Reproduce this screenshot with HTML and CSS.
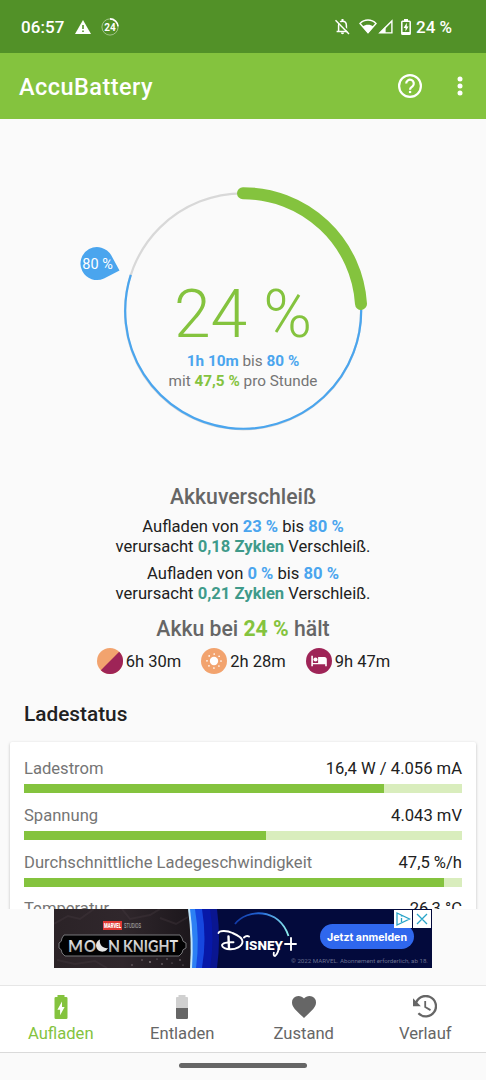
FILE: index.html
```html
<!DOCTYPE html>
<html lang="de">
<head>
    <meta charset="utf-8" />
    <title>AccuBattery</title>
    <link rel="stylesheet" href="styles.css">
</head>
<body>
<div class="phone">
    <!-- status bar -->
    <div class="statusbar">
        <span class="time">06:57</span>
        <svg class="warn" width="16" height="14" viewBox="0 0 16 14">
            <path d="M8 0L16 14H0z" fill="#fff"/>
            <path d="M8 5v4M8 10.5v1.6" stroke="#529128" stroke-width="1.6"/>
        </svg>
        <svg class="level" width="18" height="18" viewBox="0 0 18 18">
            <circle cx="9" cy="9" r="8.1" fill="none" stroke="#a0c387" stroke-width="1"/>
            <path d="M9 .9A8.1 8.1 0 0 1 17.1 8.4" fill="none" stroke="#fff" stroke-width="1.6"/>
            <text x="9" y="12.6" text-anchor="middle">24</text>
        </svg>
        <span class="space"></span>
        <svg class="bell" width="15" height="16" viewBox="0 0 15 16">
            <path d="M3.6 12V6.4C3.6 3.8 5.3 2.2 7.5 2.2s3.9 1.6 3.9 4.2V12M1.6 12.4h11.8" fill="none" stroke="#fff" stroke-width="1.5"/>
            <path d="M6.5 0h2v2.4h-2zM5.9 13.6h3.2a1.6 1.6 0 0 1-3.2 0z" fill="#fff"/>
            <path d="M1.6 .4L15 14" stroke="#529128" stroke-width="1.6"/>
            <path d="M.5 1.2L14 15" stroke="#fff" stroke-width="1.4"/>
        </svg>
        <svg class="wifi" width="18" height="15" viewBox="0 0 18 15">
            <path d="M1 4.4C5.4-.2 12.6-.2 17 4.4L9 13.6z" fill="none" stroke="#fff" stroke-width="1.4"/>
            <path d="M3.6 7.6c3.2-2.6 7.6-2.6 10.8 0L9 14.2z" fill="#fff"/>
        </svg>
        <svg class="signal" width="15" height="15" viewBox="0 0 15 15">
            <path d="M13.9 1.9v12H1.9z" fill="none" stroke="#fff" stroke-width="1.4"/>
            <path d="M7.6 7.6v6.4H1.4z" fill="#fff"/>
        </svg>
        <svg class="batt" width="10" height="16" viewBox="0 0 10 16">
            <path d="M3 0h4v2H3z" fill="#fff"/>
            <rect x=".8" y="2.3" width="8.4" height="12.9" rx=".8" fill="none" stroke="#fff" stroke-width="1.5"/>
            <path d="M1 13h8v2H1z" fill="#fff"/>
            <path d="M5.8 3.8L2.6 8.9h1.9v3.6l3-4.9h-1.7z" fill="#fff"/>
        </svg>
        <span class="percent">24 %</span>
    </div>

    <!-- title bar -->
    <div class="appbar">
        <h1>AccuBattery</h1>
        <svg class="help" width="24" height="24" viewBox="0 0 24 24">
            <circle cx="12" cy="12" r="10.9" fill="none" stroke="#fff" stroke-width="2.2"/>
            <path d="M8.2 9.6a3.8 3.8 0 1 1 6.3 2.8C13 13.6 12 14 12 15.8" fill="none" stroke="#fff" stroke-width="2.2"/>
            <path d="M10.9 16.9h2.3v2.2h-2.3z" fill="#fff"/>
        </svg>
        <svg class="more" width="6" height="20" viewBox="0 0 6 20">
            <g fill="#fff"><circle cx="3" cy="3" r="2.5"/><circle cx="3" cy="10" r="2.5"/><circle cx="3" cy="17" r="2.5"/></g>
        </svg>
    </div>

    <div class="content">
        <!-- charge ring -->
        <div class="gauge">
            <svg width="326" height="260" viewBox="80 180 326 260">
                <g fill="none">
                    <circle cx="243" cy="311.3" r="118" stroke="#d8d8d8" stroke-width="2.2"/>
                    <path d="M361 304A118 118 0 1 1 130.8 274.8" stroke="#4aa5ee" stroke-width="2.2"/>
                    <path d="M243 193.2A118 118 0 0 1 361 303.9" stroke="#84c33e" stroke-width="12" stroke-linecap="round"/>
                </g>
                <path d="M119.5 270.5L104 278.5A16.5 16.5 0 1 1 111.2 255.2z" fill="#4aa5ee"/>
                <text class="pin" x="97.6" y="269.2" text-anchor="middle">80 %</text>
            </svg>
            <div class="gauge-text">
                <div class="big">24 %</div>
                <div><b class="blue">1h 10m</b> bis <b class="blue">80 %</b></div>
                <div>mit <b class="green">47,5 %</b> pro Stunde</div>
            </div>
        </div>

        <!-- wear -->
        <div class="wear">
            <h2>Akkuverschleiß</h2>
            <p>Aufladen von <b class="blue">23 %</b> bis <b class="blue">80 %</b><br>verursacht <b class="teal">0,18 Zyklen</b> Verschleiß.</p>
            <p>Aufladen von <b class="blue">0 %</b> bis <b class="blue">80 %</b><br>verursacht <b class="teal">0,21 Zyklen</b> Verschleiß.</p>
            <h2 class="lasts">Akku bei <b class="green">24 %</b> hält</h2>
        </div>
        <div class="times">
            <div class="item">
                <svg width="26" height="26" viewBox="0 0 26 26">
                    <circle cx="13" cy="13" r="13" fill="#f2a36e"/>
                    <path d="M22.2 3.8A13 13 0 0 1 3.8 22.2z" fill="#9e2457"/>
                </svg>
                <span>6h 30m</span>
            </div>
            <div class="item">
                <svg width="26" height="26" viewBox="0 0 26 26">
                    <circle cx="13" cy="13" r="13" fill="#f2a36e"/>
                    <circle cx="13" cy="13" r="4.2" fill="#fff"/>
                    <circle cx="13" cy="13" r="7" fill="none" stroke="#fff" stroke-width="1.7" stroke-linecap="round" stroke-dasharray="0 5.498"/>
                </svg>
                <span>2h 28m</span>
            </div>
            <div class="item">
                <svg width="26" height="26" viewBox="0 0 26 26">
                    <circle cx="13" cy="13" r="13" fill="#9e2457"/>
                    <path d="M5.3 7.8h1.6v7.2h5.2V9h6.2a2.5 2.5 0 0 1 2.5 2.5v6.7h-1.6v-2H6.9v2H5.3z" fill="#fff"/>
                    <circle cx="9.5" cy="11.5" r="2.1" fill="#fff"/>
                </svg>
                <span>9h 47m</span>
            </div>
        </div>

        <!-- charging status -->
        <h3>Ladestatus</h3>
        <div class="card">
            <div class="row"><span>Ladestrom</span><em>16,4 W / 4.056 mA</em></div>
            <div class="bar"><div style="width: 82.1%"></div></div>
            <div class="row"><span>Spannung</span><em>4.043 mV</em></div>
            <div class="bar"><div style="width: 55.3%"></div></div>
            <div class="row"><span>Durchschnittliche Ladegeschwindigkeit</span><em>47,5 %/h</em></div>
            <div class="bar"><div style="width: 96%"></div></div>
            <div class="row"><span>Temperatur</span><em>26,3 °C</em></div>
        </div>
    </div>

    <!-- banner -->
    <div class="ad">
        <svg width="378" height="59" viewBox="0 0 378 59">
            <defs>
                <linearGradient id="stone"><stop offset="0" stop-color="#2b2327"/><stop offset=".5" stop-color="#30272c"/><stop offset="1" stop-color="#1c171c"/></linearGradient>
                <linearGradient id="silver" x2="0" y2="1"><stop offset="0" stop-color="#fff"/><stop offset="1" stop-color="#999"/></linearGradient>
                <linearGradient id="arc"><stop offset="0" stop-color="#123aa8"/><stop offset=".5" stop-color="#2469d8"/><stop offset="1" stop-color="#8ff0ee"/></linearGradient>
            </defs>
            <rect width="378" height="59" fill="#030a3c"/>
            <path d="M0 0h163q4 30 0 59H0z" fill="#0a1690"/>
            <path d="M0 0h156q5 30 0 59H0z" fill="#0718a8"/>
            <path d="M0 0h148q5 30 0 59H0z" fill="#1647e0"/>
            <path d="M0 0h141q5 30 1 59H0z" fill="#2c80f4"/>
            <path d="M0 0h136q4 30 2 59H0z" fill="#bfe5fb"/>
            <path d="M0 0h134q4 30 2 59H0z" fill="url(#stone)"/>
            <g fill="none" stroke="#483c42" stroke-width="2" opacity=".35">
                <path d="M0 15l14-8 12 3 14-10M68 0l8 10 20-4 10-6M106 9l16 6 12-7M3 51l18 4 20-3 12 7"/>
            </g>
            <g fill="#b9adb2" opacity=".7">
                <circle cx="88" cy="51" r=".7"/><circle cx="96" cy="53" r=".9"/><circle cx="103" cy="50" r=".6"/><circle cx="108" cy="55" r=".8"/><circle cx="113" cy="50" r=".7"/><circle cx="118" cy="54" r=".6"/><circle cx="126" cy="51" r=".8"/><circle cx="78" cy="56" r=".7"/><circle cx="129" cy="56" r=".6"/>
            </g>
            <path d="M10 26h116l2 3q0 4 4 5v5q-4 1-4 5l-3 3H11l-3-3q0-4-3-5v-5q3-1 3-5z" fill="#020203" stroke="#77777a" stroke-width="1"/>
            <rect x="49" y="12" width="19" height="9" fill="#e03a35"/>
            <text class="marvel" x="50" y="19.3" textLength="17" lengthAdjust="spacingAndGlyphs">MARVEL</text>
            <text class="studios" x="70" y="19.3" textLength="17" lengthAdjust="spacingAndGlyphs">STUDIOS</text>
            <text class="moon" x="14" y="43" textLength="15" lengthAdjust="spacingAndGlyphs">M</text>
            <text class="moon" x="30" y="43" textLength="12" lengthAdjust="spacingAndGlyphs">O</text>
            <path d="M46 30.5a6.3 6.3 0 1 0 8 8.6 7 7 0 0 1-8-8.6z" fill="#e6e6e6"/>
            <text class="moon" x="54" y="43" textLength="12" lengthAdjust="spacingAndGlyphs">N</text>
            <text class="moon" x="69" y="43" textLength="55" lengthAdjust="spacingAndGlyphs">KNIGHT</text>
            <path d="M181 15C192 0 225-2 234.5 27" fill="none" stroke="url(#arc)" stroke-width="1.8"/>
            <!-- D and plus of the logo lettering -->
            <g fill="none" stroke="#fff" stroke-linecap="round">
                <path d="M164.5 24c1-3 9-2.5 14 0 6 2.5 10 5 10 8.5 0 5-7 8-12.5 7.8-4 0-8-2-8-4s5-3.5 11.5-3" stroke-width="1.9"/>
                <path d="M174.5 27.5l.5 12" stroke-width="2.4"/>
                <path d="M237 29v12M231 35h11" stroke-width="1.9"/>
                <path d="M190 28.5q2.5-2.5 5-1" stroke-width="1.9"/>
            </g>
            <text class="disney" x="191" y="40.5" textLength="38" lengthAdjust="spacingAndGlyphs">isney</text>
            <path d="M225 38q-1 7-4 9-2 0-1-4" fill="none" stroke="#fff" stroke-width="1.8"/>
            <rect x="266" y="15" width="94" height="25" rx="12.5" fill="#2f67ed"/>
            <text class="cta" x="273" y="32" textLength="80" lengthAdjust="spacingAndGlyphs">Jetzt anmelden</text>
            <text class="legal" x="237" y="54.3" textLength="137" lengthAdjust="spacingAndGlyphs">© 2022 MARVEL. Abonnement erforderlich, ab 18.</text>
            <path d="M340 1h18v18h-18zM359 1h18v18h-18z" fill="#fff"/>
            <g fill="none" stroke="#28a4c8" stroke-width="1.3">
                <path d="M343 4l12.5 6-12.5 6zM347.5 9v4M347.5 6.5v1M363 5l10 10M373 5l-10 10"/>
            </g>
        </svg>
    </div>

    <!-- tabs -->
    <div class="tabs">
        <div class="tab active">
            <svg width="24" height="24" viewBox="0 0 24 24">
                <path d="M8.5 0h7v2h1.7q1.3 0 1.3 1.3v19.4q0 1.3-1.3 1.3H6.8q-1.3 0-1.3-1.3V3.3Q5.5 2 6.8 2h1.7z" fill="#84c33e"/>
                <path d="M13 6.5L8.4 14.8h2.7v5.4l4.5-8.1H13z" fill="#fff"/>
            </svg>
            <span>Aufladen</span>
        </div>
        <div class="tab">
            <svg width="24" height="24" viewBox="0 0 24 24">
                <path d="M8.5 0h7v2h1.7q.8 0 .8 1.3V13H6V3.3Q6 2 6.8 2h1.7z" fill="#d0d0d0"/>
                <path d="M6 13h12v9.7q0 1.3-1.3 1.3H7.3Q6 24 6 22.7z" fill="#666"/>
            </svg>
            <span>Entladen</span>
        </div>
        <div class="tab">
            <svg width="24" height="24" viewBox="0 0 24 24">
                <path d="M12 22.9L10.2 21.3C4 15.6 0 12 0 7.5A6.4 6.4 0 0 1 6.5 1C8.6 1 10.7 2 12 3.6 13.3 2 15.4 1 17.5 1A6.4 6.4 0 0 1 24 7.5C24 12 20 15.6 13.8 21.3z" fill="#666"/>
            </svg>
            <span>Zustand</span>
        </div>
        <div class="tab">
            <svg width="24" height="24" viewBox="0 0 24 24">
                <path d="M2.7 9.5A10.2 10.2 0 1 1 5.4 18.3" fill="none" stroke="#666" stroke-width="2.3"/>
                <path d="M0 3.3v7.9h7.9z" fill="#666"/>
                <path d="M12.2 6v6l5.3 3.1" fill="none" stroke="#666" stroke-width="1.8"/>
            </svg>
            <span>Verlauf</span>
        </div>
    </div>
    <div class="gesture"><div></div></div>
</div>
</body>
</html>
```

FILE: styles.css
```css
body, h1, h2, h3, p{
    margin: 0;
}
body{
    font-family: Roboto, "Noto Sans", sans-serif;
    background: #fafafa;
    color: #212121;
}
svg{
    display: block;
    flex: none;
}
.phone{
    width: 486px;
    height: 1080px;
    display: flex;
    flex-direction: column;
    overflow: hidden;
}

/* status bar */
.statusbar{
    height: 53px;
    flex: none;
    display: flex;
    align-items: center;
    padding: 0 33px 0 21px;
    background: #529128;
    color: #fff;
    font-size: 17px;
    font-weight: 500;
    white-space: nowrap;
}
.time{
    width: 54px;
    letter-spacing: 0.1px;
}
.level{
    margin-left: 10px;
}
.level text{
    font-size: 10px;
    font-weight: 700;
    fill: #fff;
}
.space{
    flex: 1;
}
.wifi{
    margin-left: 9px;
}
.signal{
    margin-left: 1px;
}
.batt{
    margin: 0 5px 0 8px;
}
.percent{
    width: 37px;
}

/* title bar */
.appbar{
    height: 66px;
    flex: none;
    display: flex;
    align-items: center;
    padding: 0 23px 0 19px;
    background: #84c33e;
    color: #fff;
}
.appbar h1{
    flex: 1;
    font-size: 23.5px;
    font-weight: 500;
    line-height: 66px;
    letter-spacing: 0.45px;
    padding-top: 2px;
}
.more{
    margin-left: 35px;
}

.blue{
    color: #4aa5ee;
}
.green{
    color: #84c33e;
}
.teal{
    color: #3f9a8a;
}

/* scroll area, runs under the banner */
.content{
    height: 790px;
    flex: none;
    overflow: hidden;
}
.gauge{
    position: relative;
    height: 260px;
    padding: 61px 0 0 80px;
}
.gauge-text{
    position: absolute;
    top: 159px;
    left: 0;
    width: 100%;
    text-align: center;
    font-size: 15.3px;
    line-height: 20px;
    color: #757575;
}
.gauge-text .big{
    height: 73px;
    line-height: 74px;
    font-size: 66px;
    font-weight: 300;
    color: #84c33e;
}
.pin{
    font-size: 14.5px;
    fill: #fff;
}

.wear{
    padding-top: 44px;
    text-align: center;
}
.wear h2{
    font-size: 21.2px;
    font-weight: 500;
    line-height: 26px;
    color: #666;
}
.wear p{
    font-size: 16.6px;
    line-height: 19.5px;
    margin-top: 8px;
}
.wear h2 + p{
    margin-top: 7px;
}
.wear h2.lasts{
    margin-top: 13px;
}
.times{
    display: flex;
    justify-content: center;
    gap: 20px;
    margin-top: 6px;
    padding-left: 1px;
    font-size: 16.5px;
}
.item{
    display: flex;
    align-items: center;
    gap: 3px;
}
.item span{
    padding-top: 1px;
}

h3{
    margin: 26px 24px 14px;
    font-size: 20.8px;
    font-weight: 500;
    line-height: 28px;
}
.card{
    margin: 0 10px;
    padding: 17px 14px;
    background: #fff;
    border-radius: 2px;
    box-shadow: 0 1px 3px rgba(0, 0, 0, 0.25);
}
.row{
    display: flex;
    justify-content: space-between;
    font-size: 16.6px;
    line-height: 20px;
}
.row span{
    color: #757575;
}
.row em{
    font-style: normal;
}
.bar{
    height: 9.3px;
    margin: 5px 0 12.5px;
    background: #d9edbd;
}
.bar div{
    height: 100%;
    background: #84c33e;
}

/* banner */
.ad{
    height: 76px;
    flex: none;
    display: flex;
    justify-content: center;
    align-items: flex-start;
    background: #fafafa;
}
.ad text{
    fill: #fff;
}
.ad .marvel{
    font-size: 7px;
    font-weight: 900;
}
.ad .studios{
    font-size: 7px;
    fill: #bbb;
}
.ad .moon{
    font-family: Lato, sans-serif;
    font-size: 17px;
    font-weight: 700;
    fill: url(#silver);
}
.ad .disney{
    font-size: 16px;
    font-weight: 700;
    font-variant: small-caps;
}
.ad .cta{
    font-family: Inter, sans-serif;
    font-size: 11px;
    font-weight: 700;
}
.ad .legal{
    font-size: 6px;
    fill: #6a6f90;
}

/* tabs */
.tabs{
    height: 68px;
    flex: none;
    box-sizing: border-box;
    display: flex;
    background: #fff;
    border-top: 1px solid #e6e6e6;
    border-bottom: 1px solid #dadada;
}
.tab{
    flex: 1;
    display: flex;
    flex-direction: column;
    align-items: center;
    padding-top: 9px;
    color: #666;
    font-size: 16.6px;
    line-height: 20px;
}
.tab span{
    margin-top: 5px;
}
.tab.active{
    color: #84c33e;
}
.gesture{
    flex: 1;
    display: flex;
    justify-content: center;
}
.gesture div{
    width: 128px;
    height: 5px;
    margin-top: 10px;
    border-radius: 3px;
    background: #666;
}
```
